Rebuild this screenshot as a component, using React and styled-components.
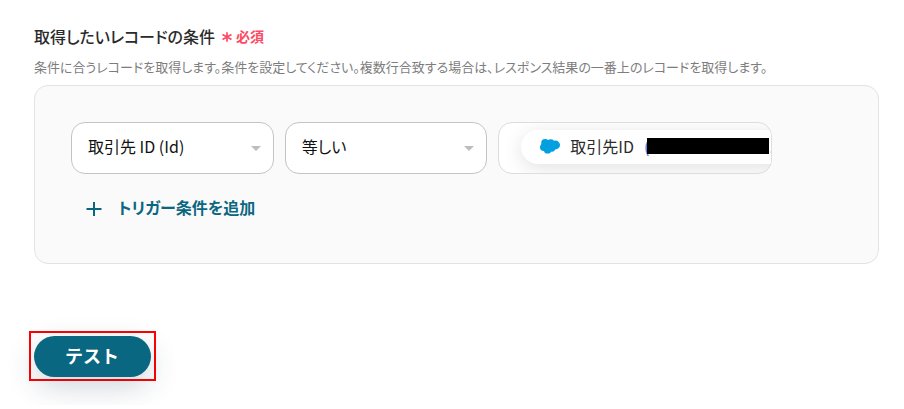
import React from 'react'
import styled, { createGlobalStyle } from 'styled-components'

const GlobalStyle = createGlobalStyle`
  * {
    box-sizing: border-box;
  }
  body {
    margin: 0;
    background-color: #fff;
    color: #2b2b2b;
    font-family: 'Noto Sans CJK JP', sans-serif;
    font-feature-settings: 'palt';
  }
  button,
  select {
    font-family: inherit;
    font-feature-settings: inherit;
  }
`

const Page = styled.main`
  padding: 25px 25px 24px 34px;
`

const Heading = styled.h2`
  display: flex;
  align-items: center;
  gap: 7px;
  margin: 0;
  font-size: 16px;
  font-weight: 500;
  line-height: 22px;
`

const Required = styled.span`
  display: flex;
  align-items: center;
  gap: 4px;
  color: #fb4c65;
  font-size: 14px;
  font-weight: 700;
`

const Description = styled.p`
  margin: 10px 0 9px;
  color: #7d7d7d;
  font-size: 13px;
  line-height: 19px;
`

// 条件の入力エリア
const Panel = styled.section`
  padding: 36px 36px 45px;
  border: 1px solid #e2e3e5;
  border-radius: 14px;
  background-color: #fafafa;
`

const ConditionRow = styled.div`
  display: grid;
  grid-template-columns: 20fr 20fr minmax(0, 27fr);
  gap: 11px;
  padding-right: 70px;
`

const SelectBox = styled.div`
  display: grid;
  align-items: center;
  min-width: 0;

  > * {
    grid-area: 1 / 1;
  }
  > svg {
    justify-self: end;
    margin-right: 13px;
    pointer-events: none;
  }
`

const Select = styled.select`
  width: 100%;
  height: 52px;
  padding: 0 32px 4px 16px;
  appearance: none;
  border: 1px solid #c4c4c4;
  border-radius: 14px;
  background-color: #fff;
  color: #111;
  font-size: 16px;
`

const ValueField = styled.div`
  height: 52px;
  padding: 7px 0 0 22px;
  overflow: hidden;
  border: 1px solid #dcdde2;
  border-radius: 14px;
  background-color: #fff;
`

const ValueChip = styled.div`
  display: flex;
  align-items: center;
  width: max-content;
  height: 34px;
  padding: 0 20px 2px 19px;
  border-radius: 17px;
  background-color: #fff;
  box-shadow: 0 4px 20px rgba(0, 0, 0, 0.12);
  font-size: 16px;
  line-height: 22px;
  white-space: nowrap;
`

const ChipLabel = styled.span`
  margin: 0 10px;
`

const ChipValue = styled.span`
  display: flex;
  align-items: center;
  color: #3977d5;
`

const Mask = styled.span`
  width: 122px;
  height: 16px;
  margin-left: -2px;
  background-color: #000;
`

const AddButton = styled.button`
  display: flex;
  align-items: center;
  gap: 16px;
  margin: 22px 0 0 15px;
  padding: 0;
  border: 0;
  background: none;
  color: #0b6781;
  font-size: 16px;
  font-weight: 700;
  line-height: 22px;
  cursor: pointer;

  > svg {
    margin-top: 4px;
  }
`

const Highlight = styled.div`
  width: max-content;
  margin: 67px 0 0 -5px;
  padding: 3px 3px 2px;
  border: 2px solid #f00;
`

const TestButton = styled.button`
  display: block;
  padding: 0 32px 2px 31px;
  border: 0;
  border-radius: 21px;
  background-color: #0a6782;
  box-shadow: 0 10px 30px rgba(20, 50, 80, 0.2);
  color: #fff;
  font-size: 18px;
  font-weight: 700;
  font-feature-settings: normal;
  line-height: 39px;
  cursor: pointer;
`

function Caret() {
  return (
    <svg width="10" height="5" viewBox="0 0 10 5" aria-hidden="true">
      <path d="M0 0h10L5 5z" fill="#bdbdbd" />
    </svg>
  )
}

function Asterisk() {
  return (
    <svg width="10" height="14" viewBox="0 0 10 14" aria-hidden="true">
      <path d="M5 3.3v9.4M.5 5.4l9 5.2M9.5 5.4l-9 5.2" stroke="currentColor" strokeWidth="1.7" />
    </svg>
  )
}

function Plus() {
  return (
    <svg width="16" height="16" viewBox="0 0 16 16" aria-hidden="true">
      <path d="M8 1v14M.5 8h15" stroke="currentColor" strokeWidth="2" />
    </svg>
  )
}

function Cloud() {
  return (
    <svg width="20" height="16" viewBox="0 0 20 16" aria-hidden="true">
      <g fill="#049fdf">
        <circle cx="5.2" cy="5" r="4" />
        <circle cx="10.8" cy="4.6" r="3.4" />
        <circle cx="15.6" cy="7" r="4.4" />
        <circle cx="3.8" cy="9.2" r="3.8" />
        <circle cx="7.6" cy="11.9" r="3.7" />
        <circle cx="11.8" cy="10.4" r="3.3" />
        <path d="M4 4h11v7H4z" />
      </g>
    </svg>
  )
}

function ConditionSelect({ label, options }) {
  return (
    <SelectBox>
      <Select aria-label={label}>
        {options.map((option) => (
          <option key={option}>{option}</option>
        ))}
      </Select>
      <Caret />
    </SelectBox>
  )
}

export default function App() {
  return (
    <>
      <GlobalStyle />
      <Page>
        <Heading>
          取得したいレコードの条件
          <Required>
            <Asterisk />
            必須
          </Required>
        </Heading>
        <Description>
          条件に合うレコードを取得します。条件を設定してください。複数行合致する場合は、レスポンス結果の一番上のレコードを取得します。
        </Description>
        <Panel>
          <ConditionRow>
            <ConditionSelect label="項目" options={['取引先 ID (Id)']} />
            <ConditionSelect label="条件" options={['等しい']} />
            <ValueField>
              <ValueChip>
                <Cloud />
                <ChipLabel>取引先ID</ChipLabel>
                {/* 値はマスクして表示 */}
                <ChipValue>
                  (<Mask />.
                </ChipValue>
              </ValueChip>
            </ValueField>
          </ConditionRow>
          <AddButton type="button">
            <Plus />
            トリガー条件を追加
          </AddButton>
        </Panel>
        <Highlight>
          <TestButton type="button">テスト</TestButton>
        </Highlight>
      </Page>
    </>
  )
}
